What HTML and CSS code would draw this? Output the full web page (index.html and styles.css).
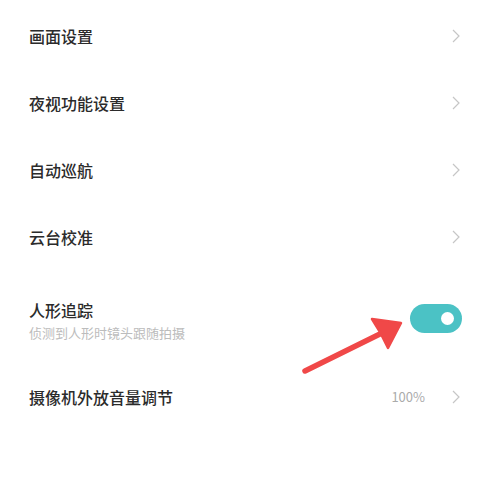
FILE: index.html
```html
<!DOCTYPE html>
<html lang="zh-CN">
<head>
    <meta charset="UTF-8">
    <meta name="viewport" content="width=device-width, initial-scale=1.0">
    <title>摄像机设置</title>
    <link rel="stylesheet" href="styles.css">
</head>
<body>
    <div class="settings">
        <div class="row">
            <span class="title">画面设置</span>
            <svg class="chevron" viewBox="0 0 8 14"><polyline points="1,1 7,7 1,13"/></svg>
        </div>
        <div class="row">
            <span class="title">夜视功能设置</span>
            <svg class="chevron" viewBox="0 0 8 14"><polyline points="1,1 7,7 1,13"/></svg>
        </div>
        <div class="row">
            <span class="title">自动巡航</span>
            <svg class="chevron" viewBox="0 0 8 14"><polyline points="1,1 7,7 1,13"/></svg>
        </div>
        <div class="row">
            <span class="title">云台校准</span>
            <svg class="chevron" viewBox="0 0 8 14"><polyline points="1,1 7,7 1,13"/></svg>
        </div>
        <div class="row row-tall">
            <div class="text">
                <span class="title">人形追踪</span>
                <span class="sub">侦测到人形时镜头跟随拍摄</span>
            </div>
            <div class="switch on"><span class="knob"></span></div>
        </div>
        <div class="row">
            <span class="title">摄像机外放音量调节</span>
            <div class="right">
                <span class="value">100%</span>
                <svg class="chevron" viewBox="0 0 8 14"><polyline points="1,1 7,7 1,13"/></svg>
            </div>
        </div>

        <!-- red annotation arrow pointing at the switch -->
        <svg class="arrow" width="498" height="503" viewBox="0 0 498 503">
            <line x1="305" y1="371" x2="386" y2="331" stroke="#f04848" stroke-width="5.5" stroke-linecap="round"/>
            <polygon points="401,323 372,319 380,332 388,348" fill="#f04848" stroke="#f04848" stroke-width="2.5" stroke-linejoin="round"/>
        </svg>
    </div>
</body>
</html>
```

FILE: styles.css
```css
html, body {
    margin: 0;
    background: #fff;
}
body {
    font-family: "Noto Sans CJK SC", "Noto Sans", sans-serif;
    color: #2b2b2b;
}
.settings {
    position: relative;
    padding-top: 2px;
    height: 501px;
}
.row {
    display: flex;
    align-items: center;
    justify-content: space-between;
    height: 67px;
    padding: 0 38px 0 29px;
}
.row-tall {
    height: auto;
    align-items: flex-start;
    padding: 30px 36px 22px 29px;
}
.title {
    font-size: 16px;
    line-height: 20px;
    font-weight: 500;
}
.text {
    display: flex;
    flex-direction: column;
    gap: 4px;
}
.sub {
    font-size: 13px;
    line-height: 17px;
    color: #bcbcbc;
}
.chevron {
    width: 8px;
    height: 14px;
    fill: none;
    stroke: #c6c6c6;
    stroke-width: 1.2;
}
.right {
    display: flex;
    align-items: center;
    gap: 27px;
}
.value {
    font-size: 13px;
    color: #ababab;
}
.switch {
    width: 52px;
    height: 29px;
    margin-top: 4px;
    border-radius: 15px;
    background: #4bc2c5;
    display: flex;
    align-items: center;
    justify-content: flex-end;
    padding-right: 8px;
    box-sizing: border-box;
}
.knob {
    width: 13px;
    height: 13px;
    border-radius: 50%;
    background: #fff;
}
.arrow {
    position: absolute;
    left: 0;
    top: 0;
    pointer-events: none;
}
```
